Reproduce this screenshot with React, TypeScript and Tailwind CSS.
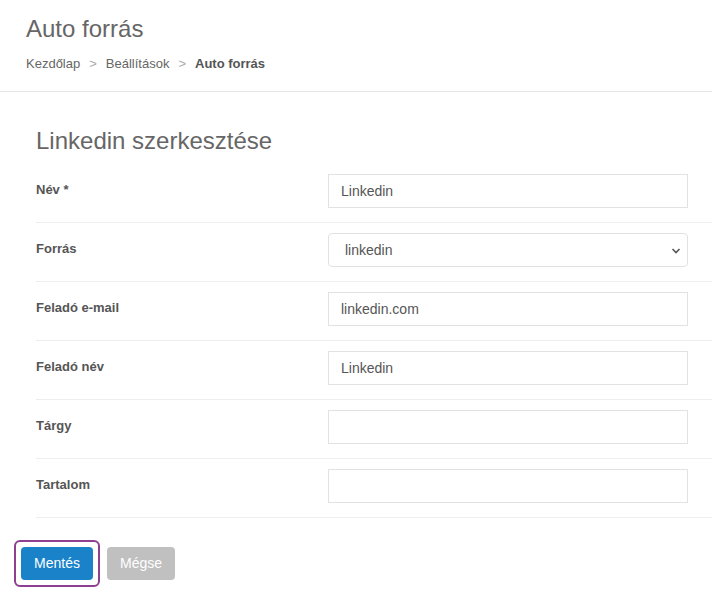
const rows: { label: string; value: string; select?: boolean }[] = [
  { label: 'Név *', value: 'Linkedin' },
  { label: 'Forrás', value: 'linkedin', select: true },
  { label: 'Feladó e-mail', value: 'linkedin.com' },
  { label: 'Feladó név', value: 'Linkedin' },
  { label: 'Tárgy', value: '' },
  { label: 'Tartalom', value: '' },
];

export default function App() {
  return (
    <div className="min-h-screen bg-white font-['Liberation_Sans',Arial,sans-serif] text-[#555]">
      <div className="border-b border-[#e6e6e6] px-[26px] pt-[15px] pb-[19px]">
        <h1 className="text-[24px] leading-[28px] text-[#666]">Auto forrás</h1>
        <div className="mt-[13px] flex items-center gap-[9px] text-[13px] leading-[16px] text-[#666]">
          <span>Kezdőlap</span>
          <span className="text-[#aaa]">&gt;</span>
          <span>Beállítások</span>
          <span className="text-[#aaa]">&gt;</span>
          <span className="font-bold text-[#555]">Auto forrás</span>
        </div>
      </div>

      <div className="pl-[36px] pt-[35px]">
        <h2 className="text-[24px] leading-[28px] text-[#666]">Linkedin szerkesztése</h2>
        <div className="mt-[9px]">
          {rows.map((r) => (
            <div
              key={r.label}
              className="flex items-center border-b border-[#eeeeee] pt-[10px] pb-[14px]"
            >
              <label className="w-[292px] -mt-[2px] text-[13px] font-bold text-[#555]">{r.label}</label>
              {r.select ? (
                <div className="relative h-[34px] w-[360px] rounded-[4px] border border-[#e2e2e2] bg-white">
                  <span className="absolute left-[16px] top-[8px] text-[14px] leading-[16px] text-[#555]">
                    {r.value}
                  </span>
                  <svg
                    className="absolute right-[6px] top-[13px]"
                    width="10"
                    height="8"
                    viewBox="0 0 10 8"
                  >
                    <path d="M1.5 2 L5 5.5 L8.5 2" stroke="#555" strokeWidth="1.6" fill="none" />
                  </svg>
                </div>
              ) : (
                <div className="h-[34px] w-[360px] border border-[#e2e2e2] bg-white px-[12px] pt-[8px] text-[14px] leading-[16px] text-[#555]">
                  {r.value}
                </div>
              )}
            </div>
          ))}
        </div>
      </div>

      <div className="mt-[22px] flex items-center gap-[7px] pl-[14px]">
        <div className="rounded-[6px] border-[2px] border-[#8e3f8f] p-[5px]">
          <button className="h-[33px] w-[72px] rounded-[4px] bg-[#1a82c8] text-[14px] text-white">
            Mentés
          </button>
        </div>
        <button className="h-[33px] w-[68px] rounded-[4px] bg-[#c0c0c0] text-[14px] text-white">
          Mégse
        </button>
      </div>
    </div>
  );
}
